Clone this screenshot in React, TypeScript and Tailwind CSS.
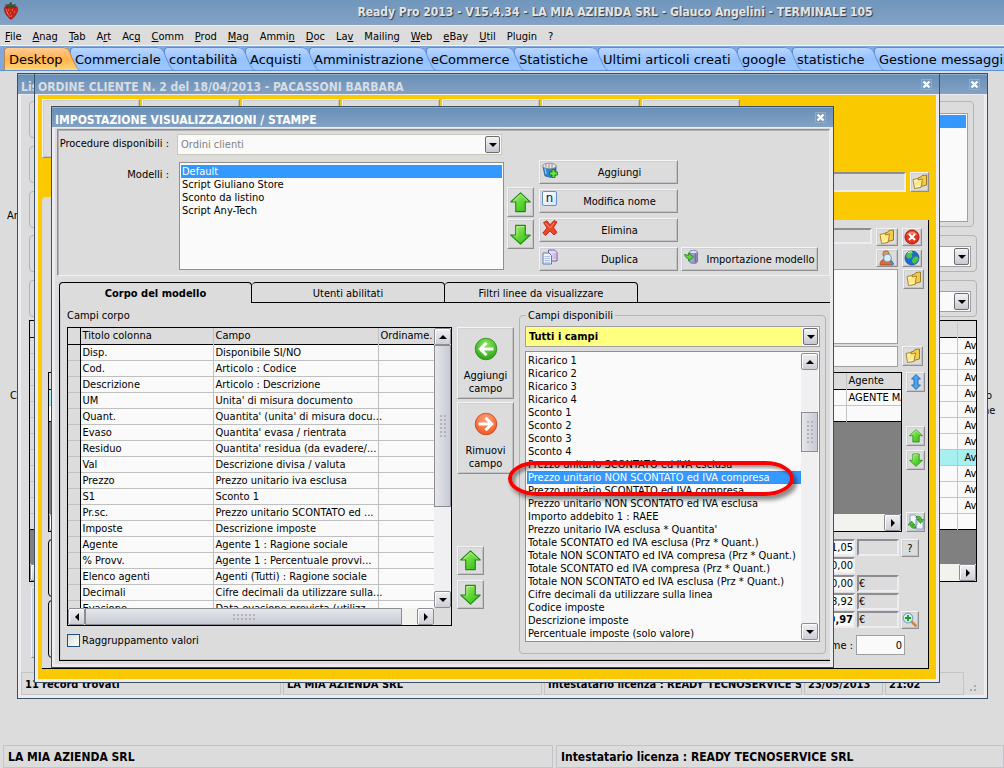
import { useState } from 'react'
import type { ReactNode } from 'react'
import clsx from 'clsx'

const MENU: [string, number][] = [
  ['File', 0], ['Anag', 0], ['Tab', 0], ['Art', 1], ['Acq', 2], ['Comm', 0], ['Prod', 0], ['Mag', 0], ['Ammin', 4],
  ['Doc', 0], ['Lav', 2], ['Mailing', 6], ['Web', 0], ['eBay', 0], ['Util', 0], ['Plugin', -1], ['?', -1],
]

const TABS = [
  { label: 'Desktop', width: 'w-[66px]' },
  { label: 'Commerciale', width: 'w-[94px]' },
  { label: 'contabilità', width: 'w-[81px]' },
  { label: 'Acquisti', width: 'w-[64px]' },
  { label: 'Amministrazione', width: 'w-[117px]' },
  { label: 'eCommerce', width: 'w-[88px]' },
  { label: 'Statistiche', width: 'w-[84px]' },
  { label: 'Ultimi articoli creati', width: 'w-[139px]' },
  { label: 'google', width: 'w-[55px]' },
  { label: 'statistiche', width: 'w-[82px]' },
  { label: 'Gestione messaggistica', width: 'w-[190px]' },
]

const MODELS = ['Default', 'Script Giuliano Store', 'Sconto da listino', 'Script Any-Tech']

const BODY_FIELDS = [
  ['Disp.', 'Disponibile SI/NO'],
  ['Cod.', 'Articolo : Codice'],
  ['Descrizione', 'Articolo : Descrizione'],
  ['UM', "Unita' di misura documento"],
  ['Quant.', "Quantita' (unita' di misura docu..."],
  ['Evaso', "Quantita' evasa / rientrata"],
  ['Residuo', "Quantita' residua (da evadere/..."],
  ['Val', 'Descrizione divisa / valuta'],
  ['Prezzo', 'Prezzo unitario iva esclusa'],
  ['S1', 'Sconto 1'],
  ['Pr.sc.', 'Prezzo unitario SCONTATO ed ...'],
  ['Imposte', 'Descrizione imposte'],
  ['Agente', 'Agente 1 : Ragione sociale'],
  ['% Provv.', 'Agente 1 : Percentuale provvi...'],
  ['Elenco agenti', 'Agenti (Tutti) : Ragione sociale'],
  ['Decimali', 'Cifre decimali da utilizzare sulla...'],
  ['Evasione', 'Data evasione prevista (utilizz...'],
]

const AVAILABLE = [
  'Ricarico 1', 'Ricarico 2', 'Ricarico 3', 'Ricarico 4',
  'Sconto 1', 'Sconto 2', 'Sconto 3', 'Sconto 4',
  'Prezzo unitario SCONTATO ed IVA esclusa',
  'Prezzo unitario NON SCONTATO ed IVA compresa',
  'Prezzo unitario SCONTATO ed IVA compresa',
  'Prezzo unitario NON SCONTATO ed IVA esclusa',
  'Importo addebito 1 : RAEE',
  "Prezzo unitario IVA esclusa * Quantita'",
  'Totale SCONTATO ed IVA esclusa (Prz * Quant.)',
  'Totale NON SCONTATO ed IVA compresa (Prz * Quant.)',
  'Totale SCONTATO ed IVA compresa (Prz * Quant.)',
  'Totale NON SCONTATO ed IVA esclusa (Prz * Quant.)',
  'Cifre decimali da utilizzare sulla linea',
  'Codice imposte',
  'Descrizione imposte',
  'Percentuale imposte (solo valore)',
]

const RAISED = 'border border-t-[#f4f4f6] border-l-[#f4f4f6] border-r-[#8e8e90] border-b-[#8e8e90] bg-[#dcdcdc] shadow-[inset_1px_1px_0_#cfcfd6,inset_-1px_-1px_0_#c4c4c6]'
const SUNKEN = 'border-2 border-t-[#8e8e90] border-l-[#8e8e90] border-r-[#ececf2] border-b-[#ececf2]'

/* ---------- icons ---------- */

function Strawberry() {
  return (
    <svg className="w-4 h-[18px] -mt-1" viewBox="0 0 16 18">
      <path d="M2 5c3-2 9-2 12 0 2 3-1 8-4 11-1.500 1.500-3 1.500-4 0C3 13 0 8 2 5z" fill="#c8201c" stroke="#7c1512" strokeWidth=".6" />
      <path d="M3 7c1 4 3 6 4 8" stroke="#ef6a50" fill="none" />
      <path d="M5 8h1M9 8h1M7 11h1M11 10h1M4 11h1M8 14h1" stroke="#f4c27a" strokeWidth=".8" />
      <path d="M8 5L3 6l2-2-3-1 4-.500L8 0l1 3 4-.500-2 1.500 2 2z" fill="#3c5a2c" stroke="#26391c" strokeWidth=".4" />
    </svg>
  )
}

function GreenArrow({ down, className }: { down?: boolean; className: string }) {
  return (
    <svg className={className} viewBox="0 0 22 22">
      <defs>
        <linearGradient id="ga" x1="0" y1="0" x2="1" y2="1">
          <stop offset="0" stopColor="#b4f47c" />
          <stop offset=".5" stopColor="#62d838" />
          <stop offset="1" stopColor="#2fb414" />
        </linearGradient>
      </defs>
      {down
        ? <path d="M11 21L.8 11.500H6V1.500h10v10h5.200z" fill="url(#ga)" stroke="#1f8a12" strokeWidth="1.200" strokeLinejoin="round" />
        : <path d="M11 1l10.200 9.500H16v10H6v-10H.8z" fill="url(#ga)" stroke="#1f8a12" strokeWidth="1.200" strokeLinejoin="round" />}
      <path d={down ? 'M7.200 12.500V2.700h7.600' : 'M3.500 9.500L11 2.600l7.500 6.900'} fill="none" stroke="#d2fab0" strokeWidth=".9" opacity=".8" />
    </svg>
  )
}

function CircleArrow({ right }: { right?: boolean }) {
  return (
    <svg className="w-6 h-6" viewBox="0 0 24 24">
      <defs>
        <radialGradient id={right ? 'co' : 'cg'} cx=".5" cy=".3" r=".75">
          <stop offset="0" stopColor={right ? '#ffa47c' : '#8ce860'} />
          <stop offset="1" stopColor={right ? '#ee5420' : '#22a00e'} />
        </radialGradient>
      </defs>
      <circle cx="12" cy="12" r="10.800" fill={right ? 'url(#co)' : 'url(#cg)'} stroke={right ? '#c8481c' : '#2a8a1c'} strokeWidth=".8" />
      <path d={right ? 'M11.500 5.800L17.800 12l-6.300 6.200M17 12H4.500' : 'M12.500 5.800L6.200 12l6.300 6.200M7 12h12.500'} fill="none" stroke="#fff" strokeWidth="3" />
    </svg>
  )
}

function Folder() {
  return (
    <svg className="w-4 h-4" viewBox="0 0 16 16">
      <path d="M6 4l3-1 1-1.500 4.500-.500V11L7 13z" fill="#f2cc48" stroke="#8c6410" strokeWidth=".8" strokeLinejoin="round" />
      <path d="M1 5.500l4.500-1 1 1.500 4-1L9 13.500 2.500 14.500z" fill="#ffe98a" stroke="#9a7014" strokeWidth=".8" strokeLinejoin="round" />
      <path d="M2 7l3-.7M3 13l5-1" stroke="#fffbe0" strokeWidth="1" />
    </svg>
  )
}

function RedCircle() {
  return (
    <svg className="w-4 h-4" viewBox="0 0 16 16">
      <circle cx="8" cy="8" r="7" fill="#e8301c" stroke="#a81c10" />
      <path d="M2.500 6a6 6 0 0 1 11 0q-5-2-11 0z" fill="#ff9c84" opacity=".7" />
      <path d="M5 5l6 6M11 5l-6 6" stroke="#fff" strokeWidth="2.400" />
    </svg>
  )
}

function PersonSearch() {
  return (
    <svg className="w-4 h-4" viewBox="0 0 16 16">
      <path d="M1 15c0-4 2-5 4-6h5c3 1 4 3 4 6z" fill="#dc6c38" stroke="#9c3c14" strokeWidth=".7" />
      <circle cx="7" cy="4" r="3.200" fill="#e89858" stroke="#9c4c1c" strokeWidth=".7" />
      <circle cx="8.500" cy="8" r="3.800" fill="#d4f0ff" stroke="#7c9cb8" strokeWidth="1.200" />
      <path d="M11 11l3.500 3.500" stroke="#4c84c0" strokeWidth="2" />
    </svg>
  )
}

function Globe() {
  return (
    <svg className="w-4 h-4" viewBox="0 0 16 16">
      <circle cx="8" cy="8" r="7" fill="#1c6cd0" stroke="#144c98" strokeWidth=".8" />
      <path d="M3 3.500c2-2.500 6-2.500 6-1s-2 1.500-1 3-1 3-3 3-4-2-2-5zM9 8c2-2 5-2 5.500 0s-2 5-4 5.500S7 10 9 8z" fill="#4cc43c" />
      <path d="M4 3c1-1 3-1.500 4-1" stroke="#d8f8ff" strokeWidth="1" fill="none" />
    </svg>
  )
}

function BlueUpDown() {
  return (
    <svg className="w-[10px] h-4" viewBox="0 0 10 16">
      <path d="M5 .500L9.500 5H7v6h2.500L5 15.500.500 11H3V5H.500z" fill="#4ca4f0" stroke="#1c64b8" strokeWidth=".9" />
    </svg>
  )
}

function Refresh() {
  return (
    <svg className="w-4 h-4" viewBox="0 0 16 16">
      <path d="M2 1h5l2 2v8H2zM8 5h5l2 2v8H8z" fill="#f4f8ff" stroke="#7088b8" strokeWidth=".8" />
      <path d="M8 2.500c4-1 5.500 1 5.500 3H16l-3.500 4L9 5.500h2C11 4 10 3.500 8 4zM8 14c-4 1-5.500-1-5.500-3H0l3.500-4L7 11H5c0 1.500 1 2 3 1.500z" fill="#48c02c" stroke="#1f7c14" strokeWidth=".6" />
    </svg>
  )
}

function ZoomIn() {
  return (
    <svg className="w-4 h-4" viewBox="0 0 16 16">
      <path d="M9 9l5.500 5.500" stroke="#d8843c" strokeWidth="2.600" />
      <circle cx="6" cy="6" r="4.800" fill="#d0f0f4" stroke="#7ca8c0" strokeWidth="1.200" />
      <path d="M6 3v6M3 6h6" stroke="#1c981c" strokeWidth="1.800" />
    </svg>
  )
}

function AddIcon() {
  return (
    <svg className="w-4 h-4" viewBox="0 0 16 16">
      <path d="M1 5l2 9 6 1.500 5-2.500V4z" fill="#2c84d4" stroke="#1c5490" strokeWidth=".7" />
      <path d="M3 6l1 6" stroke="#8cd0ff" strokeWidth="1.200" />
      <ellipse cx="7.500" cy="4" rx="6.800" ry="2.800" fill="#e4e4e4" stroke="#787878" strokeWidth=".7" />
      <path d="M4 1.500v4M7 1v5M10 1v5" stroke="#8c8c8c" strokeWidth=".9" />
      <path d="M10 7.500h3v2.500h2.700v3H13v2.700h-3V13H7.500v-3H10z" fill="#6ce04c" stroke="#147414" strokeWidth=".9" />
    </svg>
  )
}

function RenameIcon() {
  return (
    <span className="w-[15px] h-[15px] rounded-[2px] border border-[#6a90cc] bg-gradient-to-br from-white to-[#d4e4fa] text-[13px] leading-[11px] text-center text-[#10182c]">n</span>
  )
}

function DeleteIcon() {
  return (
    <svg className="w-4 h-4" viewBox="0 0 16 16">
      <path d="M1.500 2.500L5 .800l3 4L12 .500l3 1.500-3.500 5.500 3.500 5-3 2.500-4-4-4.500 4.500L.800 13 5 8z" fill="#f04424" stroke="#b01c10" strokeWidth=".8" strokeLinejoin="round" />
      <path d="M3.500 3L8 8l4-5" stroke="#ff9c80" fill="none" strokeWidth=".9" />
    </svg>
  )
}

function DuplicateIcon() {
  return (
    <svg className="w-4 h-4" viewBox="0 0 16 16">
      <path d="M6.500 1h6l2.500 2.500V12H6.500z" fill="#e4dcf8" stroke="#68509c" strokeWidth=".9" />
      <path d="M1 4h6l2.500 2.500V15H1z" fill="#eef4ff" stroke="#5470a8" strokeWidth=".9" />
      <path d="M2.500 7.500H8M2.500 9.500H8M2.500 11.500H8M2.500 13.300H8" stroke="#9cb4dc" strokeWidth=".8" />
      <path d="M10.500 5H14M10.500 7H14M10.500 9H14" stroke="#a890cc" strokeWidth=".8" />
    </svg>
  )
}

function ImportIcon() {
  return (
    <svg className="w-4 h-4" viewBox="0 0 16 16">
      <path d="M5.500 3v9.500c0 2.500 8 2.500 8 0V3z" fill="#a0a0cc" stroke="#5c5c90" strokeWidth=".7" />
      <path d="M11.500 5v8.500" stroke="#54547c" strokeWidth="2" opacity=".6" />
      <ellipse cx="9.500" cy="3" rx="4" ry="1.800" fill="#dcdcf4" stroke="#6c6c9c" strokeWidth=".7" />
      <path d="M.500 5.500l4 .800V4L9.500 8l-5 4V9.700C2.500 9.500 1.500 8 .500 5.500z" fill="#5cd43c" stroke="#1c7c14" strokeWidth=".8" />
    </svg>
  )
}

/* ---------- small controls ---------- */

function Triangle({ dir }: { dir: 'up' | 'down' | 'left' | 'right' }) {
  const d = { up: 'M0 6L4 2l4 4z', down: 'M0 2l4 4 4-4z', left: 'M6 0L2 4l4 4z', right: 'M2 0l4 4-4 4z' }[dir]
  return <svg className="w-2 h-2" viewBox="0 0 8 8"><path d={d} fill="#000" /></svg>
}

function ArrowButton({ dir, label }: { dir: 'up' | 'down' | 'left' | 'right'; label: string }) {
  return (
    <button aria-label={label} className="w-[17px] h-[17px] shrink-0 flex items-center justify-center border border-[#8c8c94] rounded-[2px] bg-gradient-to-b from-[#f0f0f3] to-[#ceced6] shadow-[inset_1px_1px_0_#fff]">
      <Triangle dir={dir} />
    </button>
  )
}

function Grip({ horizontal }: { horizontal?: boolean }) {
  return (
    <span className={clsx('grid gap-[2px]', horizontal ? 'grid-cols-6' : 'grid-cols-2')}>
      {Array.from({ length: 12 }, (_, i) => <i key={i} className="w-[2px] h-[2px] bg-[#b2b2ba]" />)}
    </span>
  )
}

function Picker({ label, options, className, selectClass, disabled }: { label: string; options: string[]; className?: string; selectClass?: string; disabled?: boolean }) {
  return (
    <span className={clsx('relative block h-[21px] border border-[#a0a0a0] bg-[#fafafa]', className)}>
      <select aria-label={label} disabled={disabled} className={clsx('block appearance-none h-full pl-[3px] opacity-100 outline-none', selectClass)}>
        {options.map(o => <option key={o}>{o}</option>)}
      </select>
      <span className="pointer-events-none absolute right-[1px] top-[1px] w-[15px] h-[17px] flex items-center justify-center border border-[#6c6c74] rounded-[2px] bg-gradient-to-b from-[#f4f4f6] to-[#c8c8d0]">
        <Triangle dir="down" />
      </span>
    </span>
  )
}

function IconButton({ label, className, children }: { label: string; className: string; children: ReactNode }) {
  return (
    <button aria-label={label} className={clsx('shrink-0 flex items-center justify-center', RAISED, className)}>
      {children}
    </button>
  )
}

function CommandButton({ icon, className, children }: { icon: ReactNode; className?: string; children: ReactNode }) {
  return (
    <button className={clsx('flex items-center h-6 pl-[2px]', RAISED, className)}>
      <span className="w-[20px] h-5 flex">{icon}</span>
      <span className="flex-1 text-center whitespace-nowrap">{children}</span>
    </button>
  )
}

function Window({ title, active, className, bodyClass, children }: { title: string; active?: boolean; className: string; bodyClass?: string; children: ReactNode }) {
  return (
    <section className={clsx('absolute flex flex-col border border-[#3c5064]', className)}>
      <header className="h-5 shrink-0 flex items-center pl-[3px] pr-[7px] border-t border-[#8fb0d0] bg-gradient-to-b from-[#6990b8] to-[#83a1c4]">
        <h2 className={clsx('flex-1 min-w-0 truncate font-bold text-[12px] leading-[15px] pt-[5px]', active ? 'text-white' : 'text-[#d8dde2]')}>{title}</h2>
        <button aria-label="Chiudi" className="w-[11px] h-[11px] flex items-center justify-center border border-[#8fadcb] bg-[#7699be]">
          <svg className="w-[9px] h-[9px] shrink-0" viewBox="0 0 9 9"><path d="M1.500 1.500l6 6M7.500 1.500l-6 6" stroke="#fff" strokeWidth="2.400" /></svg>
        </button>
      </header>
      <div className={clsx('flex-1 min-h-0 flex flex-col border-[3px] border-t border-[#ececf0] bg-[#dcdcdc]', bodyClass)}>
        {children}
      </div>
    </section>
  )
}

/* ---------- windows ---------- */

function ListWindow() {
  return (
    <Window title="Lista ordini" className="left-[17px] top-[2px] w-[971px] h-[626px]" bodyClass="pt-[6px]">
      <div className="flex gap-2 pl-2 pr-[7px] h-[216px]">
        <div className="flex-1 flex flex-col justify-between">
          {[0, 1, 2, 3, 4].map(i => <div key={i} className="h-[37px] rounded-[4px] border border-[#b4b4b4]" />)}
        </div>
        <div className="w-[300px] flex flex-col gap-2">
          <div className="h-[127px] mr-[3px] rounded-[4px] border border-[#b4b4b4] pt-[11px] pr-[5px]">
            <div className="h-[109px] border border-[#a0a0a0] bg-[#fafafa] p-px">
              <div className="h-[13px] bg-[#3398ff]" />
            </div>
          </div>
          <div className="h-[37px] rounded-[4px] border border-[#b4b4b4] pt-[10px] pr-[5px]">
            <Picker label="Filtro stato" options={['']} selectClass="w-full" />
          </div>
          <div className="h-[37px] rounded-[4px] border border-[#b4b4b4] pt-[10px] pr-[5px]">
            <Picker label="Filtro agente" options={['']} selectClass="w-full" />
          </div>
        </div>
      </div>
      <div className="mt-[3px] ml-2 mr-[7px] h-[262px] border border-black bg-[#808080] flex flex-col justify-between">
        <table className="w-full table-fixed bg-[#fafafa]">
          <colgroup><col className="w-5" /><col /><col className="w-[19px]" /></colgroup>
          <tbody>
            <tr className="h-4 bg-[#dcdcdc] border-b border-black"><td /><td className="border-x border-[#c8c8cc]" /><td /></tr>
            {Array.from({ length: 12 }, (_, i) => (
              <tr key={i} className={clsx('h-4 border-b border-[#c4c4c4] last:border-black', i === 7 && 'bg-[#a8f0f0]')}>
                <td className="bg-[#dcdcdc]" />
                <td className="border-x border-[#c4c4c4]" />
                <td className="p-0 overflow-hidden whitespace-nowrap leading-[15px] pl-[7px]">{i < 11 ? 'Av' : ''}</td>
              </tr>
            ))}
          </tbody>
        </table>
        <div className="flex bg-[#f2f2ee]">
          <ArrowButton dir="left" label="Scorri a sinistra" />
          <span className="flex-1" />
          <ArrowButton dir="right" label="Scorri a destra" />
        </div>
      </div>
      <div className={clsx('mt-[5px] ml-[10px] w-2/5 h-[71px]', RAISED)} />
      <footer className="mt-auto flex gap-[2px] h-[23px] font-bold leading-[23px]">
        <span className="w-[260px] pl-[3px] border border-[#c4c4c8]">11 record trovati</span>
        <span className="w-[259px] pl-[3px] border border-[#c4c4c8]">LA MIA AZIENDA SRL</span>
        <span className="w-[258px] pl-[3px] border border-[#c4c4c8] overflow-hidden whitespace-nowrap">Intestatario licenza : READY TECNOSERVICE SRL</span>
        <span className="w-[79px] pl-[3px] border border-[#c4c4c8]">23/05/2013</span>
        <span className="w-[79px] pl-[3px] border border-[#c4c4c8]">21:02</span>
        <svg className="w-2 h-2 mt-3 ml-1" viewBox="0 0 8 8"><path d="M0 5h2v2H0zM4 5h2v2H4zM4 1h2v2H4z" fill="#a8a8ac" /></svg>
      </footer>
    </Window>
  )
}

const TOTALS = [
  { value: '641,05', currency: '', bold: false },
  { value: '0,00', currency: null, bold: false },
  { value: '0,00', currency: '€', bold: false },
  { value: '128,92', currency: '€', bold: false },
  { value: '769,97', currency: '€', bold: true },
]

function OrderWindow() {
  return (
    <Window title="ORDINE CLIENTE N. 2 del 18/04/2013 - PACASSONI BARBARA" className="left-[34px] top-[2px] w-[906px] h-[610px]" bodyClass="!bg-[#fbc900] pt-1 pl-1 pb-[10px] pr-[7px]">
      <div className="flex gap-[2px]">
        {[0, 1, 2, 3, 4, 5, 6].map(i => <div key={i} className={clsx('w-[98px] h-[59px]', RAISED)} />)}
      </div>
      <div className="mt-[14px] flex justify-end gap-1">
        <input aria-label="Riferimento" className={clsx('w-[400px] h-[20px] bg-[#dcdcdc]', SUNKEN)} />
        <IconButton label="Apri riferimento" className="w-[19px] h-[20px]"><Folder /></IconButton>
      </div>
      <div className="mt-[5px] w-[140px] h-[23px] rounded-tl-[4px] bg-[#dcdcdc]" />
      <div className="flex-1 border-r border-b border-black bg-[#dcdcdc] pl-[6px] pr-px pt-2 flex flex-col">
        <div className="flex gap-1 pr-[5px]">
          <span className="flex-1" />
          <input aria-label="Cliente" className={clsx('w-[400px] h-4 bg-[#dcdcdc]', SUNKEN)} />
          <IconButton label="Apri cliente" className="w-[22px] h-[18px]"><Folder /></IconButton>
          <IconButton label="Rimuovi cliente" className="w-[20px] h-[18px]"><RedCircle /></IconButton>
        </div>
        <div className="mt-[3px] flex justify-end gap-1 pr-[5px]">
          <IconButton label="Cerca cliente" className="w-[22px] h-[18px]"><PersonSearch /></IconButton>
          <IconButton label="Sito web" className="w-[20px] h-[18px]"><Globe /></IconButton>
        </div>
        <div className="mt-[2px] flex items-start justify-end gap-[5px] pr-[3px]">
          <textarea aria-label="Note" className="w-[400px] h-[75px] resize-none border border-[#a0a0a0] bg-[#fafafa]" />
          <IconButton label="Apri note" className="w-[21px] h-[20px]"><Folder /></IconButton>
        </div>
        <div className="mt-[2px] flex items-start justify-end gap-1 pr-1">
          <input aria-label="Destinazione" className="w-[400px] h-[21px] border border-[#a0a0a0] bg-[#fafafa]" />
          <IconButton label="Apri destinazione" className="w-[21px] h-[20px]"><Folder /></IconButton>
        </div>
        <div className="mt-[5px] flex gap-1 pr-[2px]">
          <div className="flex-1 h-[160px] border border-black bg-[#808080] flex flex-col justify-between">
            <table className="w-full table-fixed bg-[#fafafa]">
              <colgroup><col /><col className="w-[55px]" /></colgroup>
              <thead>
                <tr className="h-4 border-b border-black bg-[#dcdcdc] text-left leading-[15px]">
                  <th />
                  <th className="border-l border-[#c4c4c4] pl-[2px] font-normal">Agente</th>
                </tr>
              </thead>
              <tbody>
                <tr className="h-4 border-b border-[#c4c4c4] leading-[15px]">
                  <td className="bg-[#a8f0f0]"><div className="ml-[100px] h-[15px] bg-[#fafafa]" /></td>
                  <td className="border-l border-[#c4c4c4] pl-[2px] overflow-hidden whitespace-nowrap">AGENTE MARIO</td>
                </tr>
                <tr className="h-4 border-b border-black"><td /><td className="border-l border-[#c4c4c4]" /></tr>
              </tbody>
            </table>
            <div className="flex bg-[#f2f2ee]">
              <ArrowButton dir="left" label="Scorri a sinistra" />
              <span className="flex-1" />
              <ArrowButton dir="right" label="Scorri a destra" />
            </div>
          </div>
          <div className="flex flex-col gap-[4px]">
            <IconButton label="Ordina righe" className="w-[19px] h-[20px]"><BlueUpDown /></IconButton>
            <IconButton label="Sposta riga su" className="w-[19px] h-[20px] mt-[30px]"><GreenArrow className="w-[14px] h-[14px]" /></IconButton>
            <IconButton label="Sposta riga giù" className="w-[19px] h-[20px]"><GreenArrow down className="w-[14px] h-[14px]" /></IconButton>
            <IconButton label="Aggiorna righe" className="w-[19px] h-[20px] mt-auto"><Refresh /></IconButton>
          </div>
        </div>
        <div className="mt-[7px] flex gap-2 pr-2">
          <div className="flex-1 flex flex-col gap-[3px]">
            <div className="h-[58px] rounded-[4px] border border-black" />
            <div className="h-[58px] rounded-[4px] border border-black" />
          </div>
          <div className="w-[190px]">
            {TOTALS.map((t, i) => (
              <div key={i} className="flex gap-[2px] h-[18px] items-start">
                <input aria-label={`Totale ${i + 1}`} readOnly value={t.value} className={clsx('ml-auto w-[80px] h-[17px] bg-[#fafafa] text-right', SUNKEN, t.bold && 'font-bold')} />
                {t.currency !== null
                  ? <span className={clsx('w-[42px] h-[17px] leading-[14px]', SUNKEN)}>{t.currency}</span>
                  : <span className="w-[42px]" />}
                <span className="w-[18px]">
                  {i === 0 && <IconButton label="Aiuto" className="w-[18px] h-[18px]">?</IconButton>}
                  {i === 4 && <IconButton label="Dettaglio" className="w-[18px] h-[18px]"><ZoomIn /></IconButton>}
                </span>
              </div>
            ))}
            <label className="mt-[6px] flex justify-end items-center gap-[3px] pr-[14px]">
              Volume :
              <input defaultValue="0" className="w-[49px] h-[20px] pr-[2px] text-right border border-[#a0a0a0] bg-[#fafafa]" />
            </label>
          </div>
        </div>
      </div>
    </Window>
  )
}

function ModelPanel() {
  const [model, setModel] = useState(0)
  return (
    <div className="mt-px ml-[2px] h-[147px] flex border border-t-[#8e8e90] border-l-[#8e8e90] border-r-[#f0f0f4] border-b-[#f0f0f4] shadow-[inset_1px_1px_0_#b0b0b4]">
      <div className="mt-1">
        <div className="flex items-start">
          <span className="w-[111px] mr-2 pt-[3px] text-right">Procedure disponibili :</span>
          <Picker label="Procedure disponibili" disabled options={['Ordini clienti']} className="w-[325px] !border-[#c8c8b8]" selectClass="w-full text-[#808080]" />
        </div>
        <div className="mt-[7px] flex items-start">
          <span className="w-[111px] mr-[10px] pt-[6px] text-right">Modelli :</span>
          <ul role="listbox" aria-label="Modelli" className="w-[325px] h-[108px] border border-[#909090] bg-[#fafafa] pt-[2px] px-px">
            {MODELS.map((m, i) => (
              <li key={m} role="option" aria-selected={i === model} onClick={() => setModel(i)} className={clsx('pl-px', i === model && 'bg-[#3398ff] text-white')}>{m}</li>
            ))}
          </ul>
        </div>
      </div>
      <div className="ml-[3px] mt-[57px] flex flex-col gap-[2px]">
        <IconButton label="Sposta su" className="w-[27px] h-[30px]"><GreenArrow className="w-[21px] h-[21px]" /></IconButton>
        <IconButton label="Sposta giù" className="w-[27px] h-[30px]"><GreenArrow down className="w-[21px] h-[21px]" /></IconButton>
      </div>
      <div className="ml-[5px] mt-[30px] w-[139px] flex flex-col gap-[5px]">
        <CommandButton icon={<AddIcon />}>Aggiungi</CommandButton>
        <CommandButton icon={<RenameIcon />}>Modifica nome</CommandButton>
        <CommandButton icon={<DeleteIcon />}>Elimina</CommandButton>
        <CommandButton icon={<DuplicateIcon />}>Duplica</CommandButton>
      </div>
      <div className="ml-[3px] mt-[117px]">
        <CommandButton icon={<ImportIcon />} className="w-[137px]">Importazione modello</CommandButton>
      </div>
    </div>
  )
}

function FieldsTable() {
  return (
    <div className="h-[299px] border border-black bg-[#dcdcdc] flex flex-col">
      <div className="flex flex-1 min-h-0">
        <div className="flex-1 min-w-0 overflow-hidden">
          <table className="w-full table-fixed whitespace-nowrap text-left leading-[15px]">
            <colgroup><col className="w-[12px]" /><col className="w-[133px]" /><col className="w-[165px]" /><col /></colgroup>
            <thead>
              <tr className="h-4 border-b border-black">
                <th className="border-r border-black" />
                <th className="border-r border-[#c0c0c8] pl-[2px] font-normal">Titolo colonna</th>
                <th className="border-r border-[#c0c0c8] pl-[2px] font-normal">Campo</th>
                <th className="pl-[2px] font-normal">Ordiname.</th>
              </tr>
            </thead>
            <tbody className="bg-[#fafafa]">
              {BODY_FIELDS.map(([title, field]) => (
                <tr key={title} className="h-4 border-b border-[#c0c0c0]">
                  <td className="bg-[#dcdcdc] border-r border-r-black" />
                  <td className="border-r border-[#c0c0c0] pl-[2px]">{title}</td>
                  <td className="border-r border-[#c0c0c0] pl-[2px]">{field}</td>
                  <td />
                </tr>
              ))}
            </tbody>
          </table>
        </div>
        <div className="w-[17px] flex flex-col bg-[#f0f0f2]">
          <ArrowButton dir="up" label="Scorri su" />
          <div className="h-[162px] flex items-center justify-center border border-[#8c8c94] bg-gradient-to-r from-[#e6e7ec] to-[#c6cad2]"><Grip /></div>
          <span className="flex-1" />
          <ArrowButton dir="down" label="Scorri giù" />
        </div>
      </div>
      <div className="flex mr-[17px] bg-[#f2f2ee]">
        <ArrowButton dir="left" label="Scorri a sinistra" />
        <div className="w-[317px] flex items-center justify-center border border-[#8c8c94] bg-gradient-to-b from-[#e6e7ec] to-[#c6cad2]"><Grip horizontal /></div>
        <span className="flex-1" />
        <ArrowButton dir="right" label="Scorri a destra" />
      </div>
    </div>
  )
}

function AvailableFields() {
  const [selected, setSelected] = useState(9)
  return (
    <fieldset className="relative flex-1 min-w-0 mt-[6px] h-[345px] px-[5px] border border-[#b4b4b4] rounded-[4px]">
      <legend className="ml-[1px] px-[2px]">Campi disponibili</legend>
      <Picker label="Campi disponibili" options={['Tutti i campi']} className="mt-[4px]" selectClass="w-[calc(100%-17px)] bg-[#ffff80] font-bold" />
      <div className="mt-[4px] h-[291px] flex border border-[#909090] bg-[#fafafa] p-px">
        <ul role="listbox" aria-label="Elenco campi" className="flex-1 min-w-0 pt-px overflow-hidden whitespace-nowrap">
          {AVAILABLE.map((f, i) => (
            <li key={f} role="option" aria-selected={i === selected} onClick={() => setSelected(i)} className={clsx('pl-px', i === selected && 'bg-[#3398ff] text-white outline-1 -outline-offset-1 outline-dotted outline-[#c86808]')}>{f}</li>
          ))}
        </ul>
        <div className="w-[17px] flex flex-col bg-[#f0f0f2]">
          <ArrowButton dir="up" label="Scorri su" />
          <div className="mt-[42px] h-[40px] flex items-center justify-center border border-[#8c8c94] bg-gradient-to-r from-[#e6e7ec] to-[#c6cad2]"><Grip /></div>
          <span className="flex-1" />
          <ArrowButton dir="down" label="Scorri giù" />
        </div>
      </div>
      {/* highlight ring around the chosen field */}
      <div className="pointer-events-none absolute -left-3 top-[139px] w-[286px] h-[35px] border-4 border-[#fb0000] rounded-[30px/18px] shadow-[3px_4px_4px_rgba(0,0,0,0.45),inset_3px_3px_3px_rgba(0,0,0,0.35)]" />
    </fieldset>
  )
}

function SettingsWindow() {
  const [tab, setTab] = useState(0)
  return (
    <Window active title="IMPOSTAZIONE VISUALIZZAZIONI / STAMPE" className="left-[51px] top-[35px] w-[783px] h-[562px]">
      <ModelPanel />
      <div role="tablist" className="mt-[6px] ml-1 flex h-[21px]">
        {['Corpo del modello', 'Utenti abilitati', 'Filtri linee da visualizzare'].map((t, i) => (
          <button key={t} role="tab" aria-selected={i === tab} onClick={() => setTab(i)} className={clsx('w-[193px] border-black border-t border-r rounded-t-[4px] pt-px', i === 0 && 'border-l', i === tab ? 'font-bold' : 'border-b')}>{t}</button>
        ))}
        <span className="flex-1 border-b border-black" />
      </div>
      <div className="flex-1 ml-1 mb-[3px] border-l border-b border-black flex pl-[7px] pr-1 shadow-[inset_1px_0_0_#c8c8d0,inset_0_-1px_0_#c0c0c4]">
        <div className="w-[385px] pt-[6px]">
          <div>Campi corpo</div>
          <div className="mt-[5px]"><FieldsTable /></div>
          <label className="mt-2 flex items-center gap-[2px]">
            <input type="checkbox" className="appearance-none w-[13px] h-[13px] border border-[#1c5180] bg-gradient-to-br from-[#dcdcd7] to-white checked:bg-[#3398ff]" />
            Raggruppamento valori
          </label>
        </div>
        <div className="mx-[5px] w-[57px] pt-[24px] flex flex-col items-start">
          <button className={clsx('w-full h-[72px] pt-[9px] flex flex-col items-center', RAISED)}>
            <CircleArrow />
            <span className="mt-2">Aggiungi campo</span>
          </button>
          <button className={clsx('mt-[3px] w-full h-[72px] pt-[9px] flex flex-col items-center', RAISED)}>
            <CircleArrow right />
            <span className="mt-2">Rimuovi campo</span>
          </button>
          <IconButton label="Sposta campo su" className="mt-[72px] w-[27px] h-[29px]"><GreenArrow className="w-[21px] h-[21px]" /></IconButton>
          <IconButton label="Sposta campo giù" className="mt-[5px] w-[27px] h-[29px]"><GreenArrow down className="w-[21px] h-[21px]" /></IconButton>
        </div>
        <AvailableFields />
      </div>
    </Window>
  )
}

/* ---------- shell ---------- */

function TabSlant({ active }: { active: boolean }) {
  return (
    <svg className="absolute top-0 -right-3 w-5 h-6 z-10" viewBox="0 0 20 24">
      <defs>
        <linearGradient id={active ? 'tsa' : 'tsi'} x1="0" y1="0" x2="0" y2="1">
          <stop offset="0" stopColor={active ? '#ffcb92' : '#b9d6ff'} />
          <stop offset=".5" stopColor={active ? '#ffb24a' : '#96c2ff'} />
          <stop offset="1" stopColor={active ? '#ffda80' : '#9cc8ff'} />
        </linearGradient>
      </defs>
      <path d="M0 0C8 0 8 7 11 13s4 10 8 11H0z" fill={active ? 'url(#tsa)' : 'url(#tsi)'} />
      <path d="M0 .500C8 .500 8 7 11 13s4 10 8 10.500" fill="none" stroke={active ? '#b88850' : '#5f8ed4'} />
    </svg>
  )
}

export default function App() {
  const [tab, setTab] = useState(0)
  return (
    <div className="min-h-screen flex flex-col overflow-hidden bg-[#dcdcdc] text-black text-[11px] leading-[13px] font-['DejaVu_Sans_Condensed','DejaVu_Sans',sans-serif]">
      <header className="h-[26px] flex items-center border-b border-[#f0f0f0] bg-gradient-to-b from-[#7096bc] to-[#84a2c4] pl-[3px]">
        <Strawberry />
        <h1 className="flex-1 pl-[207px] text-center text-[12px] font-bold text-[#e4e4e4] [text-shadow:1px_1px_1px_#2c3c50]">
          Ready Pro 2013 - V15.4.34 - LA MIA AZIENDA SRL - Glauco Angelini - TERMINALE 105
        </h1>
      </header>
      <nav className="h-5 flex items-center gap-[11px] pl-[5px] pt-px border-b border-[#f4f4f4]">
        {MENU.map(([m, u]) => (
          <button key={m}>
            {u < 0 ? m : <>{m.slice(0, u)}<u>{m[u]}</u>{m.slice(u + 1)}</>}
          </button>
        ))}
      </nav>
      <div role="tablist" className="h-[25px] flex pl-1 overflow-hidden border-b border-[#5f8ed4] bg-[#82a8da]">
        {TABS.map((t, i) => (
          <button key={t.label} role="tab" aria-selected={i === tab} onClick={() => setTab(i)} className={clsx('relative shrink-0 mt-px h-6 pt-[2px] text-left', t.width)}>
            <span className={clsx('absolute inset-y-0 left-0 right-2 border-t border-l rounded-tl-[4px]', i === tab
              ? 'border-[#b88850] bg-gradient-to-b from-[#ffcb92] via-[#ffb24a] to-[#ffda80]'
              : 'border-[#5f8ed4] bg-gradient-to-b from-[#b9d6ff] via-[#96c2ff] to-[#9cc8ff]')} />
            <TabSlant active={i === tab} />
            <span className="relative z-20 pl-[5px] font-['DejaVu_Sans',sans-serif] text-[13px] whitespace-nowrap">{t.label}</span>
          </button>
        ))}
      </div>
      <main className="relative flex-1 min-h-[674px]">
        <span className="absolute left-[7px] top-[138px]">Ar</span>
        <span className="absolute left-[10px] top-[318px]">C</span>
        <span className="absolute left-[986px] top-[318px]">o</span>
        <span className="absolute left-[983px] top-[333px]">ne</span>
        <ListWindow />
        <OrderWindow />
        <SettingsWindow />
      </main>
      <footer className="h-[23px] flex gap-[3px] pl-[3px] font-bold text-[12px] leading-[22px]">
        <span className="w-[550px] pl-1 border border-[#c4c4c8]">LA MIA AZIENDA SRL</span>
        <span className="flex-1 pl-1 border border-[#c4c4c8]">Intestatario licenza : READY TECNOSERVICE SRL</span>
      </footer>
    </div>
  )
}
